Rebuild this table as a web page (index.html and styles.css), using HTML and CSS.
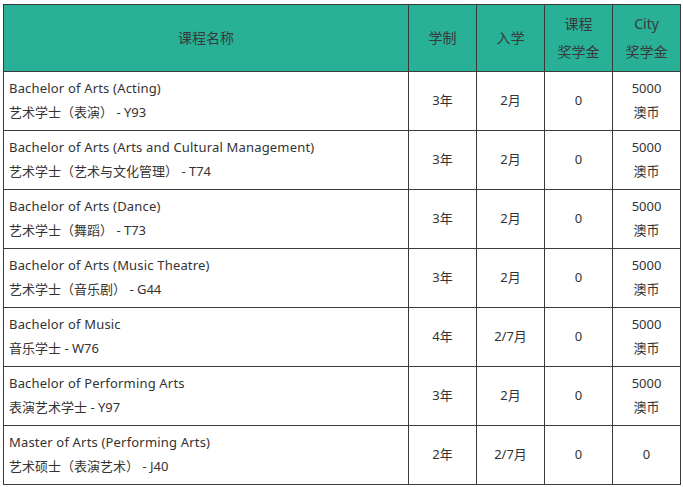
FILE: index.html
```html
<!DOCTYPE html>
<html lang="zh">
<head>
<meta charset="utf-8">
<link rel="stylesheet" href="styles.css">
</head>
<body>
<table class="courses">
  <colgroup>
    <col class="c-name"><col class="c-num"><col class="c-num"><col class="c-num"><col class="c-num">
  </colgroup>
  <thead>
    <tr>
      <th>课程名称</th>
      <th>学制</th>
      <th>入学</th>
      <th>课程<br>奖学金</th>
      <th>City<br>奖学金</th>
    </tr>
  </thead>
  <tbody>
    <tr><td class="name"><span class="en">Bachelor of Arts (Acting)</span><br>艺术学士（表演） - Y93</td><td>3年</td><td>2月</td><td>0</td><td>5000<br>澳币</td></tr>
    <tr><td class="name"><span class="en">Bachelor of Arts (Arts and Cultural Management)</span><br>艺术学士（艺术与文化管理） - T74</td><td>3年</td><td>2月</td><td>0</td><td>5000<br>澳币</td></tr>
    <tr><td class="name"><span class="en">Bachelor of Arts (Dance)</span><br>艺术学士（舞蹈） - T73</td><td>3年</td><td>2月</td><td>0</td><td>5000<br>澳币</td></tr>
    <tr><td class="name"><span class="en">Bachelor of Arts (Music Theatre)</span><br>艺术学士（音乐剧） - G44</td><td>3年</td><td>2月</td><td>0</td><td>5000<br>澳币</td></tr>
    <tr><td class="name"><span class="en">Bachelor of Music</span><br>音乐学士 - W76</td><td>4年</td><td>2/7月</td><td>0</td><td>5000<br>澳币</td></tr>
    <tr><td class="name"><span class="en">Bachelor of Performing Arts</span><br>表演艺术学士 - Y97</td><td>3年</td><td>2月</td><td>0</td><td>5000<br>澳币</td></tr>
    <tr><td class="name"><span class="en">Master of Arts (Performing Arts)</span><br>艺术硕士（表演艺术） - J40</td><td>2年</td><td>2/7月</td><td>0</td><td>0</td></tr>
  </tbody>
</table>
</body>
</html>
```
FILE: styles.css
```css
html, body {
  margin: 0;
  background: #ffffff;
}
body {
  padding: 4px 2px 0 3px;
  font-family: "Noto Sans", "Noto Sans CJK SC", sans-serif;
  color: #333333;
}
.courses {
  width: 678px;
  border-collapse: collapse;
  table-layout: fixed;
  font-size: 13px;
}
.c-name { width: 405px; }
.c-num { width: 68px; }
.courses th,
.courses td {
  border: 1px solid #3a3a3a;
  text-align: center;
  vertical-align: middle;
  padding: 0 4px;
}
.courses th {
  background: #28b197;
  font-weight: normal;
  font-size: 14px;
  line-height: 28px;
  height: 66px;
  color: #3a3a3a;
}
.courses td {
  height: 56px;
  line-height: 24px;
  padding-bottom: 2px;
}
.courses td.name {
  text-align: left;
  padding-left: 5px;
}
.courses .en {
  letter-spacing: 0.18px;
}
```
